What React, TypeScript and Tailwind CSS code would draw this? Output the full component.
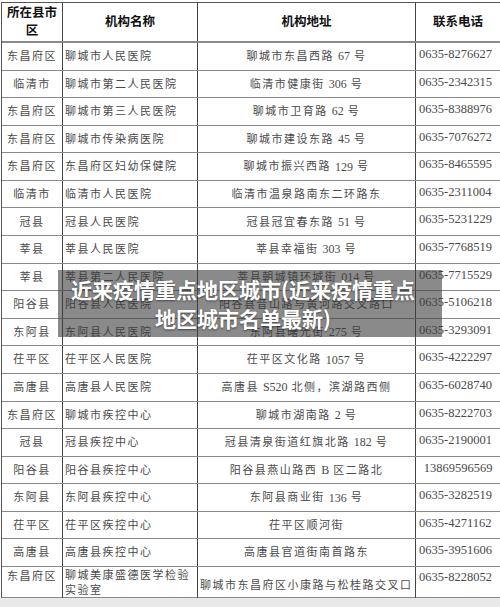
const rows: [string, string, string, string][] = [
  ["东昌府区", "聊城市人民医院", "聊城市东昌西路 67 号", "0635-8276627"],
  ["临清市", "聊城市第二人民医院", "临清市健康街 306 号", "0635-2342315"],
  ["东昌府区", "聊城市第三人民医院", "聊城市卫育路 62 号", "0635-8388976"],
  ["东昌府区", "聊城市传染病医院", "聊城市建设东路 45 号", "0635-7076272"],
  ["东昌府区", "东昌府区妇幼保健院", "聊城市振兴西路 129 号", "0635-8465595"],
  ["临清市", "临清市人民医院", "临清市温泉路南东二环路东", "0635-2311004"],
  ["冠县", "冠县人民医院", "冠县冠宜春东路 51 号", "0635-5231229"],
  ["莘县", "莘县人民医院", "莘县幸福街 303 号", "0635-7768519"],
  ["莘县", "莘县第二人民医院", "莘县朝城镇环城街 014 号", "0635-7715529"],
  ["阳谷县", "阳谷县人民医院", "阳谷县昔山路与黄河路交叉路口", "0635-5106218"],
  ["东阿县", "东阿县人民医院", "东阿县曙光街 275 号", "0635-3293091"],
  ["茌平区", "茌平区人民医院", "茌平区文化路 1057 号", "0635-4222297"],
  ["高唐县", "高唐县人民医院", "高唐县 S520 北侧，滨湖路西侧", "0635-6028740"],
  ["东昌府区", "聊城市疾控中心", "聊城市湖南路 2 号", "0635-8222703"],
  ["冠县", "冠县疾控中心", "冠县清泉街道红旗北路 182 号", "0635-2190001"],
  ["阳谷县", "阳谷县疾控中心", "阳谷县燕山路西 B 区二路北", "13869596569"],
  ["东阿县", "东阿县疾控中心", "东阿县商业街 136 号", "0635-3282519"],
  ["茌平区", "茌平区疾控中心", "茌平区顺河街", "0635-4271162"],
  ["高唐县", "高唐县疾控中心", "高唐县官道街南首路东", "0635-3951606"],
];

const cols = "grid grid-cols-[61px_135px_218px_84px]";

// latin runs (numbers, S520) should not get the wide CJK tracking
function Addr({ text }: { text: string }) {
  const parts = text.split(/\s*([A-Za-z0-9]+)\s*/);
  return (
    <>
      {parts.map((p, i) =>
        /^[A-Za-z0-9]+$/.test(p) ? (
          <span key={i} className="tracking-normal text-[12px] mx-[4px]">
            {p}
          </span>
        ) : (
          <span key={i}>{p}</span>
        )
      )}
    </>
  );
}

function Row({ r }: { r: [string, string, string, string] }) {
  const center = r[3].startsWith("1");
  return (
    <div className={`${cols} h-[27.58px] border-b border-[#8a8a8a]`}>
      <div className="flex items-center justify-center border-r border-[#444] tracking-[1.5px]">
        {r[0]}
      </div>
      <div className="flex items-center border-r border-[#444] pl-[2px] tracking-[1.5px]">
        {r[1]}
      </div>
      <div className="flex items-center justify-center border-r border-[#444] tracking-[1.5px] whitespace-nowrap">
        <Addr text={r[2]} />
      </div>
      <div
        className={`flex items-start pt-[2px] text-[12.5px] ${center ? "justify-center" : "pl-[3px]"}`}
      >
        {r[3]}
      </div>
    </div>
  );
}

export default function App() {
  return (
    <div className="relative w-[500px] h-[607px] overflow-hidden bg-white">
      <div
        className="ml-[1px] mt-[2px] w-[499px] border-t border-l border-[#555] text-[11px] text-[#4a4a4a]"
        style={{ fontFamily: "'Liberation Serif', 'Noto Sans CJK SC', serif" }}
      >
        <div className={`${cols} h-[40px] border-b-2 border-[#8a8a8a] text-[12.5px] font-bold text-[#111]`}>
          <div className="flex items-center justify-center border-r border-[#444] text-center leading-[18px]">
            所在县市
            <br />区
          </div>
          <div className="flex items-center justify-center border-r border-[#444]">机构名称</div>
          <div className="flex items-center justify-center border-r border-[#444]">机构地址</div>
          <div className="flex items-center justify-center">联系电话</div>
        </div>
        {rows.map((r, i) => (
          <Row key={i} r={r} />
        ))}
        <div className={`${cols} h-[31px] border-b border-[#8a8a8a]`}>
          <div className="flex justify-center border-r border-[#444] pt-[1px] tracking-[1.5px]">东昌府区</div>
          <div className="border-r border-[#444] pl-[2px] pt-[1px] leading-[15px] tracking-[1.5px]">
            聊城美康盛德医学检验实验室
          </div>
          <div className="flex items-end pb-[4px] border-r border-[#444] pl-[2px] tracking-[1.5px] whitespace-nowrap">
            聊城市东昌府区小康路与松桂路交叉口
          </div>
          <div className="pl-[3px] pt-[1px] text-[12.5px]">0635-8228052</div>
        </div>
      </div>
      <div className="h-[12px] bg-[#e9e9e9]" />

      <div
        className="absolute left-[58px] top-[270px] flex h-[67px] w-[384px] flex-col items-center justify-center pr-[14px] bg-[rgba(60,60,60,0.6)] text-[21px] font-bold leading-[29px] text-white [text-shadow:0_1px_2px_rgba(0,0,0,0.5)]"
        style={{ fontFamily: "'Noto Sans CJK SC', 'Noto Sans', sans-serif" }}
      >
        <div>近来疫情重点地区城市(近来疫情重点</div>
        <div>地区城市名单最新)</div>
      </div>
    </div>
  );
}
